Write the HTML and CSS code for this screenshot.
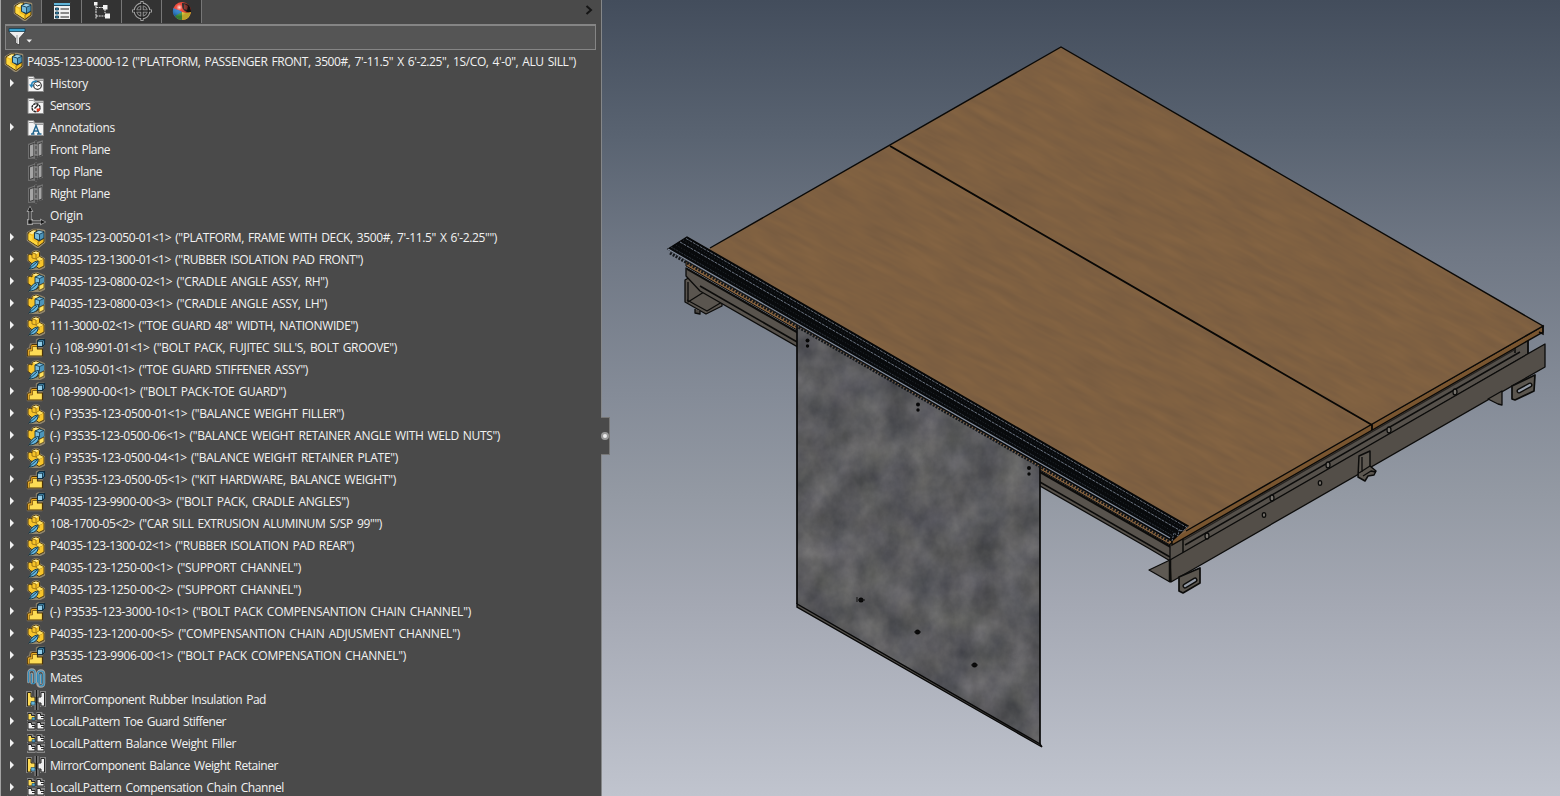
FILE: index.html
```html
<!DOCTYPE html>
<html lang="en">
<head>
<meta charset="utf-8">
<title>P4035-123-0000-12</title>
<link rel="stylesheet" href="styles.css">
</head>
<body>
<svg class="defs" width="0" height="0" aria-hidden="true">
  <symbol id="asm" viewBox="0 0 20 20">
    <path d="M2 5l5-3h4l2 0 5 1v11l-6 5-2-1-8-6z" fill="#9a8d70" stroke="#9a8d70" stroke-width="2.600" stroke-linejoin="round"/>
    <path d="M2 5l5-3h4l-1 3v6l3 2 5-3v4l-6 4.500L2 12z" fill="#f3bd22" stroke="#3a2a08" stroke-width=".9" stroke-linejoin="round"/>
    <path d="M2.500 6l4 2v4l5.500 3v3L2.500 12z" fill="#ffd83e"/><path d="M3 5l4-2.400h3L6.500 6.500z" fill="#ffec93"/><path d="M12 18v-4l5.500-3.500" fill="none" stroke="#8a6412" stroke-width=".8"/>
    <path d="M8.500 4.500l4-2 5.500 1.200v6.300l-4.500 2.500-5-2z" fill="#4b93b8" stroke="#123349" stroke-width=".9" stroke-linejoin="round"/>
    <path d="M9 4.800l4-1.700 4.500 1-4 2z" fill="#a0d3e8"/><path d="M9 5.300l4.500 1.200v5.300L9 10z" fill="#78bcdc"/><path d="M8.500 4.500l5 1.700 4.500-2M13.500 6.500v6" fill="none" stroke="#123349" stroke-width=".8"/>
  </symbol>
  <symbol id="part" viewBox="0 0 20 20">
    <path d="M2 5h3l2-3 3-1 3 1v4l5 3v8l-4 2H4l2-6-4-3z" fill="#94886c" stroke="#94886c" stroke-width="2.200" stroke-linejoin="round"/>
    <path d="M2 5l2-1 2 1V2.500L10 1l3.500 1.500v4l4.500 2.500v7l-5 2.500-6-4-5-4z" fill="#f7c42a" stroke="#42300b" stroke-width=".9" stroke-linejoin="round"/>
    <path d="M6.500 2.800L10 1.600l3 1.200L10 4z" fill="#ffec93"/><path d="M6.500 3L10 4v5l3 2 4.500-2M13 11v3M13.500 6.500L10 9l-4-1V5" fill="none" stroke="#8f6913" stroke-width=".8"/>
    <path d="M10.500 9l3-2 4 2-4 2z" fill="#ffe05d"/>
    <path d="M3.500 19c.5-4 3.500-7.500 8.500-8 .5 4-2.500 8-8.500 8z" fill="#65b5dc" stroke="#12354a"/><path d="M2.500 19.500L11 12" stroke="#12354a" stroke-width=".9"/>
  </symbol>
  <symbol id="weld" viewBox="0 0 20 20">
    <path d="M2 5h3l2-3 4-1 7 3v13l-4 2H4l2-6-4-3z" fill="#94886c" stroke="#94886c" stroke-width="2.200" stroke-linejoin="round"/>
    <path d="M2 5l2-1 2 1V2.500L10 1l4 1.500v12l-4 3-8-6z" fill="#f7c42a" stroke="#42300b" stroke-width=".9"/>
    <path d="M6.500 2.800L10 1.600l3 1.200L10 4z" fill="#ffec93"/>
    <path d="M9 5l4.500-2L18 4.500v6L13 13 9 11z" fill="#78bcdc" stroke="#12354a" stroke-width=".9"/><path d="M13 13.500l5-2.500v5l-5 2.500z" fill="#ffe05d" stroke="#42300b" stroke-width=".7"/><path d="M13.500 6.500L18 4.800v5.500l-4.500 2.300z" fill="#4c95ba"/><path d="M9 5l4.500 1.500 4.500-2M13.500 6.500v5" fill="none" stroke="#12354a" stroke-width=".8"/>
    <path d="M3.500 19c.5-4 3.500-8 9-8.500 1 4-2.500 8.500-9 8.500z" fill="#65b5dc" stroke="#12354a"/><path d="M2.500 19.500L11 12" stroke="#12354a" stroke-width=".9"/>
  </symbol>
  <symbol id="pack" viewBox="0 0 20 20">
    <path d="M1.500 11l2-1 1-4h6V2l2-1h5.500v6l-2 2v9.500h-14.500z" fill="#8a7f69" stroke="#8a7f69" stroke-width="1.400" stroke-linejoin="round"/>
    <path d="M1.500 12.500l1-1.500h2.500V8l1.500-1.500h5v4.500h5V18h-15z" fill="#fddc55" stroke="#4d3408" stroke-width="1.200" stroke-linejoin="round"/>
    <path d="M3.200 17.500v-4.700h3.200V8.400h5" fill="none" stroke="#6d4a0c" stroke-width=".9"/><path d="M2.300 17.500v-5.400h3.400V7.500h5.500" fill="none" stroke="#f0a820" stroke-width=".8"/>
    <path d="M11.500 3l2-1.700h5v5L16.500 8.500h-5z" fill="#4b93b8" stroke="#102d40" stroke-width="1.200" stroke-linejoin="round"/><path d="M12 3.500h4v4.500h-4z" fill="#94cde6"/><path d="M11.500 3.200h5v5M16.500 3.200l2-1.900" fill="none" stroke="#102d40" stroke-width=".8"/>
  </symbol>
  <symbol id="folder" viewBox="0 0 20 20">
    <path d="M2 2.500h5.500L9 5h8.500v12.500H2z" fill="#f4f4f4" stroke="#8a8a8a" stroke-width="1"/><path d="M3 4.500h4.500L9 6.500h8" fill="none" stroke="#999"/>
  </symbol>
  <symbol id="history" viewBox="0 0 20 20"><use href="#folder"/>
    <circle cx="11.500" cy="11.500" r="3.800" fill="#fff" stroke="#333" stroke-width="1.200"/><path d="M9.500 10.500l2 1.500 2.500-1" stroke="#222" fill="none"/><path d="M3 10.500h5L5.500 14z" fill="#2784b9"/><path d="M5.500 11c.2-3 3-4.500 5.500-3.500" fill="none" stroke="#2784b9" stroke-width="1.500"/>
  </symbol>
  <symbol id="sensor" viewBox="0 0 20 20"><use href="#folder"/>
    <circle cx="10" cy="11.700" r="4" fill="#fff" stroke="#222" stroke-width="1.400" stroke-dasharray="2.500 .6"/><path d="M8.500 12.500L12 9" stroke="#222" stroke-width="1.500"/><path d="M10.500 12.500H14v2L11 16z" fill="#e03a20"/>
  </symbol>
  <symbol id="note" viewBox="0 0 20 20"><use href="#folder"/>
    <path d="M5 16h3.500M11 16h4.500M6.700 16L10 7.500l3.300 8.500M8 13h4.500" fill="none" stroke="#24658d" stroke-width="1.500"/>
  </symbol>
  <symbol id="plane" viewBox="0 0 20 20">
    <path d="M3 4.500L8.500 2.500 10 1v2l6-1.500V15l-6 2v2l-1.500-1.500L3 18z" fill="#8c8c8c" stroke="#747474" stroke-width="1.800"/>
    <path d="M3.500 5l4.500-1.500v12.500l-4.500 1.500zM12 4l4-1.500V15l-4 1.500z" fill="#a5a5a5" stroke="#383838" stroke-width=".9"/><path d="M8 3.500l4 .5v12.500l-4-.5z" fill="#999" stroke="#444" stroke-width=".6"/><path d="M10 .5v19" stroke="#292929" stroke-dasharray="4 1"/>
  </symbol>
  <symbol id="origin" viewBox="0 0 20 20">
    <path d="M4 3v13h13" fill="none" stroke="#9c9c9c" stroke-width="3.400"/><path d="M4-.5l3.500 6.500h-7zM20.500 16l-6.500-3.500v7zM1 13h6v6H1z" fill="#9c9c9c"/>
    <path d="M4 2v14h13" fill="none" stroke="#1b1b1b" stroke-width="1.200"/><path d="M4 1l2 4H2zM19 16l-4-2v4zM2.300 14.300h3.400v3.400H2.300z" fill="#191919"/>
  </symbol>
  <symbol id="mates" viewBox="0 0 20 20">
    <g fill="none" stroke-linecap="round"><path d="M2.500 14V5c0-4.500 6.500-4.500 6.500 0v9M5.700 6v9M11.500 14V6c0-4.500 6.500-4.500 6.500 0v9c0 4.500-6.500 4.500-6.500 0M14.700 7v8" stroke="#a3a3a3" stroke-width="2.600"/>
    <path d="M2.500 14V5c0-4 6.500-4 6.500 0v9c0 2.500-3.500 2.500-3.500 0V6M11.500 14V6c0-4 6.500-4 6.500 0v9c0 4-5 4-5 0V7.500c0-2 2.500-2 2.500 0V15" stroke="#2f8dbd" stroke-width="1.200"/></g>
  </symbol>
  <symbol id="mirror" viewBox="0 0 20 20">
    <path d="M0 1h6v5h2.500V0h4v6H14V1h6v16h-6v-3h-1.500v6h-4v-4H6v1H0z" fill="#858585"/>
    <path d="M1.500 2.500H5V7h4v6H5v3H1.500z" fill="#ffdc55" stroke="#302812"/><path d="M18.500 2.500H15V7h-3v6h3v3h3.500z" fill="#eee" stroke="#272727"/><path d="M5 11.500h4V15H5z" fill="#66b6d9" stroke="#174258" stroke-width=".6"/><path d="M10.500 0v20" stroke="#161616" stroke-width="1.400"/>
  </symbol>
  <symbol id="pattern" viewBox="0 0 20 20">
    <path d="M1 0h6l1 2h2V0h6l1 2h2v17H1z" fill="#858585"/><path d="M1 9.500h18M10 0v19" stroke="#555"/>
    <g stroke="#242424" stroke-width="1"><path d="M2 1.500h3.500v2H9v4.500H2z" fill="#ffdc55"/><path d="M11 1.500h3.500v2H18v4.500h-7zM2 10.500h3.500v2H9V17H2zM11 10.500h3.500v2H18V17h-7z" fill="#f1f1f1"/></g>
    <path d="M6 5.500h3V8H6z" fill="#57a9d1" stroke="#174258" stroke-width=".6"/><path d="M15 5.500h3M6 14.500h3M15 14.500h3" stroke="#242424" stroke-width="1"/>
  </symbol>
</svg>

<main class="app">
  <aside class="panel">
    <nav class="tabs">
      <button class="tab active"><svg class="icon"><use href="#asm"/></svg></button>
      <button class="tab"><svg class="icon" viewBox="0 0 20 20"><path d="M1.500 1.500h17v17h-17z" fill="#f2f2f2" stroke="#333"/><path d="M2 2h16v2.500H2z" fill="#62b5d9"/><path d="M2 4.500h16" stroke="#1c4a63"/><path d="M3.500 7h3v2h-3zM3.500 11h3v2h-3zM3.500 15h3v2h-3z" fill="#318cb8" stroke="#173b4f" stroke-width=".9"/><path d="M8.500 8h8.500M8.500 12h8.500M8.500 16h8.500" stroke="#222" stroke-width="1.200"/></svg></button>
      <button class="tab"><svg class="icon" viewBox="0 0 20 20"><path d="M4 2v16M4 6.500h7M4 15h9M13 8v4" fill="none" stroke="#ddd" stroke-width="1.100" stroke-dasharray="2 .7"/><path d="M2 1h3.500v3.500H2zM11 4h4.500v4.500H11zM13 12.500h5v5h-5z" fill="#f4f4f4"/></svg></button>
      <button class="tab"><svg class="icon" viewBox="0 0 20 20"><g fill="none"><circle cx="10" cy="10" r="6.700" stroke="#a0a0a0" stroke-width="3.400"/><path d="M10 0v20M0 10h20" stroke="#a0a0a0" stroke-width="3.200"/><circle cx="10" cy="10" r="6.500" stroke="#222" stroke-width="1.500"/><path d="M10 1v18M1 10h18" stroke="#222" stroke-width="1.500"/></g></svg></button>
      <button class="tab"><svg class="icon" viewBox="0 0 20 20"><defs><radialGradient id="shade" cx=".35" cy=".3"><stop offset="0" stop-color="#fff" stop-opacity=".8"/><stop offset=".35" stop-color="#fff" stop-opacity=".1"/><stop offset="1" stop-opacity=".25"/></radialGradient></defs><circle cx="10" cy="10" r="9" fill="#ee3929"/><path d="M1.500 7C5 9 8 9 10 11L6 18C1 15 0 11 1.500 7z" fill="#247dd0"/><path d="M10 2c4 0 6 1 8 4 1 3 1 4 1 5-3 1-4 0-6-1-3-2-3-5-3-8z" fill="#1b1a1a"/><path d="M12 3l4 2-1 4-3-1z" fill="#8a2a22"/><path d="M10 11c3 1 6 1 9 0-1 5-4 8-9 8z" fill="#f9d936"/><path d="M10 11v8c-3 0-5-1-7-4z" fill="#49a642"/><circle cx="10" cy="10" r="9" fill="url(#shade)"/></svg></button>
      <svg class="chevron" viewBox="0 0 8 10"><path d="M1.500 1l4.500 4-4.500 4" fill="none" stroke="#151515" stroke-width="2"/></svg>
    </nav>
    <div class="filter">
      <svg class="funnel" viewBox="0 0 26 20"><path d="M1 3h16v2l-5.500 6v7L7.500 16v-5L1 5z" fill="#eee" stroke="#3a3a3a" stroke-width=".8"/><path d="M9 8v8" stroke="#999"/><path d="M1 1.500h16v3H1z" fill="#39a0cc" stroke="#183c50" stroke-width=".8"/><path d="M18.500 12.500h5.500l-2.700 3z" fill="#eee"/></svg>
    </div>
    <ul class="tree">
      <li class="row root"><svg class="icon"><use href="#asm"/></svg><span class="label" data-w="549">P4035-123-0000-12 ("PLATFORM, PASSENGER FRONT, 3500#, 7'-11.5" X 6'-2.25", 1S/CO, 4'-0", ALU SILL")</span></li>
      <li class="row open"><svg class="icon"><use href="#history"/></svg><span class="label" data-w="38">History</span></li>
      <li class="row"><svg class="icon"><use href="#sensor"/></svg><span class="label" data-w="40">Sensors</span></li>
      <li class="row open"><svg class="icon"><use href="#note"/></svg><span class="label" data-w="65">Annotations</span></li>
      <li class="row"><svg class="icon"><use href="#plane"/></svg><span class="label" data-w="60">Front Plane</span></li>
      <li class="row"><svg class="icon"><use href="#plane"/></svg><span class="label" data-w="52">Top Plane</span></li>
      <li class="row"><svg class="icon"><use href="#plane"/></svg><span class="label" data-w="60">Right Plane</span></li>
      <li class="row"><svg class="icon"><use href="#origin"/></svg><span class="label" data-w="33">Origin</span></li>
      <li class="row open"><svg class="icon"><use href="#asm"/></svg><span class="label" data-w="447">P4035-123-0050-01&lt;1&gt; ("PLATFORM, FRAME WITH DECK, 3500#, 7'-11.5" X 6'-2.25"")</span></li>
      <li class="row open"><svg class="icon"><use href="#part"/></svg><span class="label" data-w="313">P4035-123-1300-01&lt;1&gt; ("RUBBER ISOLATION PAD FRONT")</span></li>
      <li class="row open"><svg class="icon"><use href="#weld"/></svg><span class="label" data-w="278">P4035-123-0800-02&lt;1&gt; ("CRADLE ANGLE ASSY, RH")</span></li>
      <li class="row open"><svg class="icon"><use href="#weld"/></svg><span class="label" data-w="277">P4035-123-0800-03&lt;1&gt; ("CRADLE ANGLE ASSY, LH")</span></li>
      <li class="row open"><svg class="icon"><use href="#part"/></svg><span class="label" data-w="308">111-3000-02&lt;1&gt; ("TOE GUARD 48" WIDTH, NATIONWIDE")</span></li>
      <li class="row open"><svg class="icon"><use href="#pack"/></svg><span class="label" data-w="347">(-) 108-9901-01&lt;1&gt; ("BOLT PACK, FUJITEC SILL'S, BOLT GROOVE")</span></li>
      <li class="row open"><svg class="icon"><use href="#weld"/></svg><span class="label" data-w="258">123-1050-01&lt;1&gt; ("TOE GUARD STIFFENER ASSY")</span></li>
      <li class="row open"><svg class="icon"><use href="#pack"/></svg><span class="label" data-w="236">108-9900-00&lt;1&gt; ("BOLT PACK-TOE GUARD")</span></li>
      <li class="row open"><svg class="icon"><use href="#part"/></svg><span class="label" data-w="294">(-) P3535-123-0500-01&lt;1&gt; ("BALANCE WEIGHT FILLER")</span></li>
      <li class="row open"><svg class="icon"><use href="#weld"/></svg><span class="label" data-w="450">(-) P3535-123-0500-06&lt;1&gt; ("BALANCE WEIGHT RETAINER ANGLE WITH WELD NUTS")</span></li>
      <li class="row open"><svg class="icon"><use href="#part"/></svg><span class="label" data-w="348">(-) P3535-123-0500-04&lt;1&gt; ("BALANCE WEIGHT RETAINER PLATE")</span></li>
      <li class="row open"><svg class="icon"><use href="#pack"/></svg><span class="label" data-w="346">(-) P3535-123-0500-05&lt;1&gt; ("KIT HARDWARE, BALANCE WEIGHT")</span></li>
      <li class="row open"><svg class="icon"><use href="#pack"/></svg><span class="label" data-w="299">P4035-123-9900-00&lt;3&gt; ("BOLT PACK, CRADLE ANGLES")</span></li>
      <li class="row open"><svg class="icon"><use href="#part"/></svg><span class="label" data-w="332">108-1700-05&lt;2&gt; ("CAR SILL EXTRUSION ALUMINUM S/SP 99"")</span></li>
      <li class="row open"><svg class="icon"><use href="#part"/></svg><span class="label" data-w="304">P4035-123-1300-02&lt;1&gt; ("RUBBER ISOLATION PAD REAR")</span></li>
      <li class="row open"><svg class="icon"><use href="#part"/></svg><span class="label" data-w="251">P4035-123-1250-00&lt;1&gt; ("SUPPORT CHANNEL")</span></li>
      <li class="row open"><svg class="icon"><use href="#part"/></svg><span class="label" data-w="251">P4035-123-1250-00&lt;2&gt; ("SUPPORT CHANNEL")</span></li>
      <li class="row open"><svg class="icon"><use href="#pack"/></svg><span class="label" data-w="421">(-) P3535-123-3000-10&lt;1&gt; ("BOLT PACK COMPENSANTION CHAIN CHANNEL")</span></li>
      <li class="row open"><svg class="icon"><use href="#part"/></svg><span class="label" data-w="410">P4035-123-1200-00&lt;5&gt; ("COMPENSANTION CHAIN ADJUSMENT CHANNEL")</span></li>
      <li class="row open"><svg class="icon"><use href="#pack"/></svg><span class="label" data-w="356">P3535-123-9906-00&lt;1&gt; ("BOLT PACK COMPENSATION CHANNEL")</span></li>
      <li class="row open"><svg class="icon"><use href="#mates"/></svg><span class="label" data-w="32">Mates</span></li>
      <li class="row open"><svg class="icon"><use href="#mirror"/></svg><span class="label" data-w="216">MirrorComponent Rubber Insulation Pad</span></li>
      <li class="row open"><svg class="icon"><use href="#pattern"/></svg><span class="label" data-w="176">LocalLPattern Toe Guard Stiffener</span></li>
      <li class="row open"><svg class="icon"><use href="#pattern"/></svg><span class="label" data-w="186">LocalLPattern Balance Weight Filler</span></li>
      <li class="row open"><svg class="icon"><use href="#mirror"/></svg><span class="label" data-w="228">MirrorComponent Balance Weight Retainer</span></li>
      <li class="row open"><svg class="icon"><use href="#pattern"/></svg><span class="label" data-w="234">LocalLPattern Compensation Chain Channel</span></li>
    </ul>
  </aside>

  <section class="viewport">
    <svg class="model" viewBox="602 0 958 796">
      <defs>
        <filter id="zinc" x="0" y="0" width="100%" height="100%" color-interpolation-filters="sRGB">
          <feTurbulence type="fractalNoise" baseFrequency=".035 .03" numOctaves="5" seed="8"/>
          <feColorMatrix values=".24 0 0 0 .235  .23 .01 0 0 .235  .21 0 .04 0 .24  0 0 0 0 1"/>
          <feComposite in2="SourceGraphic" operator="in"/>
        </filter>
        <filter id="grain" x="0" y="0" width="100%" height="100%" color-interpolation-filters="sRGB">
          <feTurbulence type="fractalNoise" baseFrequency=".02 .14" numOctaves="3" seed="4"/>
          <feColorMatrix values=".07 0 0 0 .46  .045 0 0 0 .353  .01 0 0 0 .25  0 0 0 0 1"/>
        </filter>
        <clipPath id="deckClip"><path d="M1061 47L1543 326 1185 532 1172 540 690 260z"/></clipPath>
      </defs>

      <!-- left channel and front rails -->
      <g stroke="#0c0c0b" stroke-width="1.300" stroke-linejoin="round">
        <path d="M685 280l7-4 30 16v14l-16 8-21-12z" fill="#5a554f"/>
        <path d="M688 282v20l16-10 18 10-15 9-20-11M704 292l-4-5" fill="none"/>
        <path d="M695 309v4l5 1v-3" fill="#4c4843"/>
        <path d="M686 268L1172 547V562L1150 549 700 291 686 276z" fill="#58534d"/>
        <path d="M700 286L1170 557" fill="none" stroke-width="1.600"/>
        <path d="M687 269L1172 548" fill="none" stroke-width="2"/>
        <path d="M686 261L1172 541v5L686 266z" fill="#8a6540" stroke-width="1"/>
      </g>

      <!-- side frame -->
      <g stroke="#0c0c0b" stroke-width="1.300" stroke-linejoin="round">
        <path d="M1170 544L1528 337v17L1170 562z" fill="#56514b"/>
        <path d="M1185 545L1520 352M1184 553L1524 357M1183 538v15M1515 345v8M1528 337v18l6-3" fill="none" stroke-width="1.500"/>
        <path d="M1184 540L1516 349" stroke="#282522" fill="none"/>
        <path d="M1170 560L1545 344V367L1171 582z" fill="#534e48"/>
        <path d="M1170 560v22l-21-12z" fill="#5e5953"/>
        <path d="M1170 559v23" stroke-width="2.500"/>
        <path d="M1179 577l21-9v15l-17 10-4-2zM1512 386l23-11-1 16-19 9-3-1z" fill="#5b564f" stroke-width="1.700"/>
        <path d="M1185 586l10-6M1519 391l11-6" stroke-width="5" stroke-linecap="round"/>
        <path d="M1185 586l10-6M1519 391l11-6" stroke="#9299a5" stroke-width="2.200" stroke-linecap="round"/>
        <path d="M1488 399l14-8v14l-4-1z" fill="#5b564f"/>
        <path d="M1359 456l11-5v15l6 5-2 4-6 1-3 5-7-4z" fill="#5d5851" stroke-width="1.500"/>
        <path d="M1359 473l11-7M1363 476l8-5 5 1M1362 457v15" fill="none" stroke-width="1.300"/>
        <g fill="#77736d"><ellipse cx="1207" cy="536" rx="2" ry="3"/><ellipse cx="1272" cy="498" rx="2" ry="3"/><ellipse cx="1328" cy="465" rx="2" ry="3"/><ellipse cx="1389" cy="430" rx="2" ry="3"/><ellipse cx="1455" cy="392" rx="2" ry="3"/><ellipse cx="1264" cy="515" rx="1.700" ry="2.300"/><ellipse cx="1320" cy="483" rx="1.700" ry="2.300"/></g>
      </g>

      <!-- deck -->
      <path d="M1543 326v6L1172 545v-7z" fill="#79552f" stroke="#0c0a07" stroke-width="1.400"/>
      <path d="M1543 326v8l-4-2" fill="none" stroke="#0c0a07" stroke-width="1.500"/>
      <g clip-path="url(#deckClip)"><path d="M660 40h890v510H660z" fill="#7d6041"/><g transform="rotate(28 1100 300)"><rect x="600" y="-60" width="1040" height="740" filter="url(#grain)"/></g></g>
      <path d="M710 248L1061 47 1543 326 1186 531" fill="none" stroke="#0a0907" stroke-width="1.400"/>
      <path d="M890 146L1372 425v5" fill="none" stroke="#080705" stroke-width="1.800"/>

      <!-- galvanized toe guard -->
      <path d="M797 326L1040 467V745L797 604z" fill="#5a5a5b" filter="url(#zinc)"/>
      <path d="M1040 464V745M797 325V604" stroke="#090909" stroke-width="1.700"/>
      <path d="M797 604v3L1042 747l-2-3z" fill="#55524d" stroke="#090909" stroke-width="1.400"/>
      <g fill="#070707"><circle cx="807.500" cy="340.500" r="2"/><circle cx="807.500" cy="346" r="1.700"/><circle cx="918" cy="404.500" r="2"/><circle cx="918" cy="410" r="1.700"/><circle cx="1029" cy="468" r="2"/><circle cx="1029" cy="474" r="1.700"/><circle cx="861" cy="600" r="2.500"/><circle cx="917.500" cy="632" r="2.500"/><circle cx="974.500" cy="665" r="2.500"/></g>
      <path d="M857 597v5M858 600h7M914 632h7M971 665h7" stroke="#111"/>

      <!-- extruded sill -->
      <path d="M668 249L687 237 1188 526 1172 541z" fill="#080a0c" stroke="#050607" stroke-width="1.400"/>
      <g fill="none">
        <path d="M670 253L1170 541.500" stroke="#14171a" stroke-width="3" stroke-dasharray="2 1.300"/>
        <path d="M668 249L1170 538" stroke="#8690a0" stroke-width="1.200"/>
        <path d="M671 247L1173 536" stroke="#3a424d" stroke-width=".8" stroke-dasharray="2 1"/>
        <path d="M676 245L1177 534" stroke="#242a31" stroke-width="1" stroke-dasharray="1 2"/>
        <path d="M680 242L1181 531" stroke="#6c7583" stroke-width="1" stroke-dasharray="3 1"/>
        <path d="M683 240L1184 529" stroke="#252b33" stroke-width="1" stroke-dasharray="1 2"/>
        <path d="M686 238.500L1187 527.500" stroke="#77808e" stroke-width=".8" stroke-dasharray="3 1"/>
      </g>
      <path d="M1172 541l2-8 4 3 1-6 4 1 5-5" fill="none" stroke="#65707e" stroke-dasharray="2 1"/>
    </svg>
    <button class="splitter"><span class="knob"></span></button>
  </section>
</main>
<script src="labels.js"></script>
</body>
</html>
```
FILE: styles.css
```css
* { box-sizing: border-box; }
body { margin: 0; overflow: hidden; background: #4a4a4a; }
.defs { position: absolute; }
.app { display: flex; width: 1560px; height: 796px; overflow: hidden; }
.panel {
  display: flex; flex-direction: column; width: 602px; flex: none; overflow: hidden;
  background: #4a4a4a; border-right: 1px solid #858789; border-left: 1px solid #a3a3a3;
}
.tabs { display: flex; height: 24px; flex: none; margin-left: -1px; background: #4a4a4a; }
.tab {
  display: flex; align-items: flex-start; justify-content: center; width: 40px; height: 23px;
  padding: 1px 0 0; border: 0; border-right: 1px solid #777; background: #333;
}
.tab.active { width: 42px; padding-left: 4px; background: #4a4a4a; }
.icon { display: block; width: 20px; height: 20px; flex: none; }
.chevron { width: 8px; height: 10px; margin: 5px 8px 0 auto; }
.filter { height: 26px; flex: none; margin: 0 5px 0 4px; border: 1px solid #858585; border-top-width: 2px; background: #555; }
.funnel { display: block; width: 26px; height: 20px; margin: 1px 0 0 2px; }
.tree { margin: 1px 0 0; padding: 0; list-style: none; }
.row { display: flex; align-items: center; height: 22px; padding-left: 25px; }
.row.root { padding-left: 3px; }
.row .icon { margin-right: 4px; }
.row.root .icon { margin-right: 3px; }
.row.open::before {
  content: ""; width: 0; height: 0; margin: -2px 12px 0 -16px;
  border-left: 4px solid #f1f1f1; border-top: 4px solid transparent; border-bottom: 4px solid transparent;
}
.label { white-space: pre; color: #f2f2f2; font: 12px/20px "Open Sans", "Noto Sans", sans-serif; word-spacing: 1.3px; }
.viewport {
  position: relative; width: 958px; flex: none;
  background: linear-gradient(#434d5c 0%, #596371 17%, #707885 32%, #858c98 50%, #9399a3 62%, #a4a8b3 76%, #c0c4ce 100%);
}
.model { display: block; width: 958px; height: 796px; }
.splitter {
  position: absolute; left: -1px; top: 417px; width: 9px; height: 38px; padding: 0;
  border: 1px solid #777; border-left: 0; background: #4a4a4a;
}
.knob { display: block; width: 8px; height: 8px; border: 2px solid #999; border-radius: 50%; background: #eee; }
```
FILE: labels.js
```js
document.querySelectorAll('.label').forEach(function (el) {
  var gap = Number(el.dataset.w) - el.getBoundingClientRect().width;
  el.style.letterSpacing = (gap / el.textContent.length) + 'px';
});
```
